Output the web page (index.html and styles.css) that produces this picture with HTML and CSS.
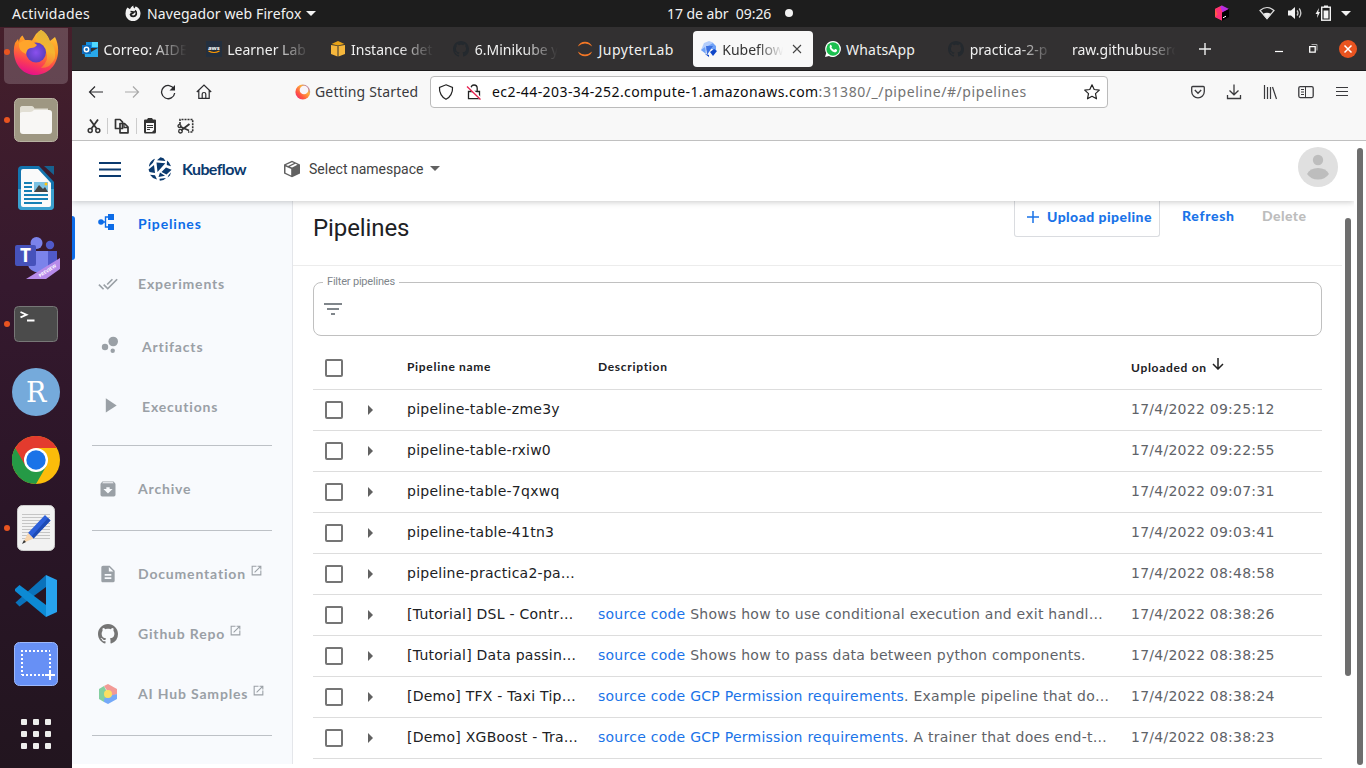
FILE: index.html
```html
<!DOCTYPE html>
<html lang="es">
<head>
<meta charset="utf-8">
<title>Kubeflow Central Dashboard</title>
<link rel="stylesheet" href="styles.css">
</head>
<body>
<svg class="defs" width="0" height="0">
  <symbol id="octo" viewBox="0 0 16 16"><path d="M8 0C3.58 0 0 3.58 0 8c0 3.54 2.29 6.53 5.47 7.59.4.07.55-.17.55-.38 0-.19-.01-.82-.01-1.49-2.01.37-2.53-.49-2.69-.94-.09-.23-.48-.94-.82-1.13-.28-.15-.68-.52-.01-.53.63-.01 1.08.58 1.23.82.72 1.21 1.87.87 2.33.66.07-.52.28-.87.51-1.07-1.78-.2-3.64-.89-3.64-3.95 0-.87.31-1.59.82-2.15-.08-.2-.36-1.02.08-2.12 0 0 .67-.21 2.2.82.64-.18 1.32-.27 2-.27s1.36.09 2 .27c1.53-1.04 2.2-.82 2.2-.82.44 1.1.16 1.92.08 2.12.51.56.82 1.27.82 2.15 0 3.07-1.87 3.75-3.65 3.95.29.25.54.73.54 1.48 0 1.07-.01 1.93-.01 2.2 0 .21.15.46.55.38A8.01 8.01 0 0 0 16 8c0-4.42-3.58-8-8-8z"/></symbol>
  <symbol id="ext" viewBox="0 0 24 24"><path d="M19 19H5V5h7V3H3v18h18v-9h-2v7zM14 3v2h3.600l-9.800 9.800 1.400 1.400L19 6.400V10h2V3h-7z"/></symbol>
  <symbol id="kf" viewBox="0 0 24 24"><path d="M9 3.200 12.500.3 15.500 1.200 17.500 4zM7 1.800 4.800 6 1 9.700C1 6.500 3.500 3 7 1.800zM19 3.500 21 5.500 23 9.200 18.800 8zM8.500 5.500 17.300 6.200 9.500 15zM6 8 7 16 1.500 15 .5 12.500zM18 10.500 23.600 12.800 18.500 17.500 13.500 15zM2 17.800 7 18.300 9 22.500 5 21zM12 15.500 17 18.800 10.500 20zM11.500 21.800 18 21 15.500 23 11.800 23.700zM20.500 18.300 23 15.300 22 18.500 19.500 20.500z"/></symbol>
</svg>
<div class="desktop">
  <header class="topbar">
    <span class="act">Actividades</span>
    <svg class="flame" width="16" height="16" viewBox="0 0 16 16"><path fill="#f2f2f2" d="M2.500 2.500 5 4.200C5.500 3 6.500 1.500 8.500.6 8 2 8.500 2.500 9.500 3.500l1-2C13 2 15.500 5 15.500 8.300A7.500 7.500 0 1 1 .7 7C.7 5.200 1.500 3.800 2.500 2.500z"/><path fill="none" stroke="#1d1d1d" stroke-width="1.700" d="M5.500 6.500 9 7.200C8 9 6 8.200 5.500 9.500 6 12 10.500 12 11.300 9c.2-1.500-.3-2.800-1.300-3.500"/></svg>
    <span class="appname">Navegador web Firefox</span>
    <i class="caret"></i>
    <span class="clock">17 de abr&nbsp; 09:26</span>
    <i class="dot"></i>
    <div class="tray">
      <svg width="16" height="16" viewBox="0 0 16 16"><path fill="#ff5a46" d="M1 4 8 .5V15.500L1 12z"/><path fill="#fc2d78" d="M4 9 8 7v8.500L1 12z"/><path fill="#b72ce0" d="M6 1.500 8 .5 15 4 8 8z"/><path fill="#ff3172" d="M1 4 6 1.500 9 8 4 10z"/><path fill="#000" d="M8 7.500 15 4v8l-7 3.700z"/><path stroke="#fff" d="M9 12.800 12 11.200"/></svg>
      <svg class="t-wifi" width="16" height="14" viewBox="0 0 16 14"><path fill="#eee" d="M8 13.500 3.800 8.200Q8 5.500 12.200 8.200z"/><path fill="none" stroke="#ddd" stroke-width="1.200" d="M8 12.500 1 4.500Q8-1.500 15 4.500z"/></svg>
      <svg class="t-vol" width="16" height="14" viewBox="0 0 16 14"><path fill="#f2f2f2" d="M1 4.500h3L8 1v12L4 9.500H1z"/><path fill="none" stroke="#ccc" stroke-width="1.300" d="M10 4.500Q12 7 10 9.500M12.200 2.500Q15.500 7 12.200 11.500"/></svg>
      <svg class="t-bat" width="16" height="16" viewBox="0 0 16 16"><path fill="#f2f2f2" d="M4 3 .5 9h2L2 13 5 7H3.300zM9 .5h4V2H9z"/><rect x="6.700" y="2.200" width="8.600" height="13" fill="none" stroke="#f2f2f2" stroke-width="1.400"/><path fill="#f2f2f2" d="M8.600 5.500h4.800v8H8.600z"/></svg>
      <i class="caret"></i>
    </div>
  </header>

  <div class="workspace">
    <nav class="dock">
      <div class="app first run">
        <svg width="46" height="46" viewBox="0 0 46 46"><defs><linearGradient id="f1" x1=".7" y1="0" x2=".4" y2="1"><stop offset="0" stop-color="#ffce38"/><stop offset=".45" stop-color="#ff8a22"/><stop offset=".75" stop-color="#fb3d55"/><stop offset="1" stop-color="#e5108a"/></linearGradient><linearGradient id="f3" x1=".5" y1="0" x2=".3" y2="1"><stop offset="0" stop-color="#e0b43c"/><stop offset=".5" stop-color="#f6b52f"/><stop offset="1" stop-color="#fb6a3c"/></linearGradient><radialGradient id="f2"><stop offset="0" stop-color="#8a50ee"/><stop offset="1" stop-color="#5b3fbf"/></radialGradient></defs><path fill="url(#f1)" d="M6 13Q6 9 9.500 6.500L12 11 19 11.500 23 5Q26 2 28 1 34 4 37 12L42 8C49 21 45 44 23 46 4 46-2 26 2 14L5 10z"/><path fill="url(#f3)" d="M23 12Q23 3 28 1 34 4 37 13 43 17 42 29 38 39 28 39 37 31 33 22 30 14 23 12z"/><circle cx="23" cy="23.500" r="10" fill="url(#f2)"/><path fill="#ffa52b" d="M6 14Q13 9 19 12L24 16Q22 19 18 19 14 19 13 25 5 22 6 14z"/></svg>
      </div>
      <div class="app run"><svg width="44" height="44" viewBox="0 0 44 44"><rect x=".5" y=".5" width="43" height="43" rx="5" fill="#9e9782" stroke="#b8b2a2"/><path fill="#e2dfd4" d="M6 13V11q0-3 3-3h8q2 0 3 2.500h14v6H6z"/><rect x="6" y="12" width="32" height="24" rx="3" fill="#f8f7f5"/><path fill="#e2dfd4" d="M6 15V11q0-3 3-3h8q3 0 3.500 3Q19 14 16 14H9q-2 0-3 1z"/></svg></div>
      <div class="app"><svg width="38" height="46" viewBox="0 0 38 46"><path fill="#1374ae" d="M5 1h17L37 17v24q0 4-4 4H5q-4 0-4-4V5q0-4 4-4z"/><path fill="#3aa0cf" d="M1 24h36v17q0 4-4 4H5q-4 0-4-4z"/><path fill="#fafafa" d="M6 4h15L34 18v22q0 2-2 2H6q-2 0-2-2V6q0-2 2-2z"/><path fill="#17618f" d="M27 1h10v9z"/><path stroke="#1680b5" stroke-width="2" d="M7 18h8M7 22h8M7 26h8M7 30h24M7 34h24M7 38h18"/><path fill="#7cc2e3" d="M17 17h14v10H17z"/><path fill="#444" d="m17 27 5-7 4 4 2-2 3 5z"/><circle cx="29" cy="19" r="1.500" fill="#ffc20e"/></svg></div>
      <div class="app"><svg width="48" height="48" viewBox="0 0 48 48"><circle cx="24.500" cy="11" r="6" fill="#7b83eb"/><circle cx="38" cy="13" r="4.200" fill="#5059c9"/><path fill="#5059c9" d="M32 19h13v18H32z"/><path fill="#7b83eb" d="M16 19h20v16q-2 6-9 6-10-2-11-8z"/><rect x="3" y="13" width="21" height="21" rx="2" fill="#4652bb"/><path fill="#b78bea" d="M48 26v11L34 47H14z"/><text class="tm" x="8" y="30">T</text><text class="pv" transform="translate(28 45.500) rotate(-33)">PREVIEW</text></svg></div>
      <div class="app run"><svg width="44" height="36" viewBox="0 0 44 36"><rect x=".5" y=".5" width="43" height="35" rx="4" fill="#4b4b4b" stroke="#777"/><path fill="none" stroke="#fff" stroke-width="1.800" d="m6.500 6 6 2.700-6 2.700M13 14.500h7.500"/></svg></div>
      <div class="app"><svg width="48" height="48" viewBox="0 0 48 48"><circle cx="24" cy="24" r="24" fill="#75aadb"/><text class="rr" x="14" y="33.500">R</text></svg></div>
      <div class="app"><svg width="48" height="48" viewBox="0 0 48 48"><circle cx="24" cy="24" r="24" fill="#fbbc0a"/><path fill="#e33b2e" d="M3.200 12A24 24 0 0 1 44.800 12H24L12 31z"/><path fill="#259a46" d="M3.200 12A24 24 0 0 0 24 48L34.400 30 24 36 13.600 30z"/><circle cx="24" cy="24" r="12" fill="#fff"/><circle cx="24" cy="24" r="9.700" fill="#1a73e8"/></svg></div>
      <div class="app run"><svg width="38" height="46" viewBox="0 0 38 46"><rect x=".5" y=".5" width="37" height="45" rx="5" fill="#f2f2f2" stroke="#ccc"/><path stroke="#c5c5c5" d="M5 9.500h28M5 12.500h28M5 15.500h28M5 18.500h28M5 21.500h28M5 24.500h28M5 27.500h28M5 30.500h28M5 33.500h28"/><path fill="#2d60da" d="m28 10 5.500 5.500-17 18-5.500-5.500z"/><path fill="#1e4bb5" d="m31 13 2.500 2.500-17 18-2-2z"/><path fill="#f7d5ac" d="m11 28 5.500 5.500L6 38z"/><path fill="#333" d="m7 35 2 2-4 2z"/></svg></div>
      <div class="app"><svg width="44" height="44" viewBox="0 0 44 44"><path fill="#0a72bb" d="M1.500 28.500 5.500 32.500 32 13V1z"/><path fill="#0d8ad4" d="M1 15 5.500 11 32 31V43L1 17z"/><path fill="#27a3ef" d="m32 1 11 5v32l-11 5z"/></svg></div>
      <div class="app"><svg width="44" height="44" viewBox="0 0 44 44"><rect x=".5" y=".5" width="43" height="43" rx="5" fill="#6790f5" stroke="#9db8fb"/><path fill="none" stroke="#fff" stroke-width="2" stroke-dasharray="2 2" d="M7 9h29M8 12v21M8 33h22M36 12v17"/><path stroke="#fff" stroke-width="2" d="M31 33h10M36 28v10"/></svg></div>
      <div class="app last"><div class="grid9"><i></i><i></i><i></i><i></i><i></i><i></i><i></i><i></i><i></i></div></div>
    </nav>

    <div class="browser">
      <div class="tabs">
        <div class="tab"><svg width="16" height="16" viewBox="0 0 16 16"><path fill="#1490df" d="M4 1h12v6H4z"/><path fill="#50d9ff" d="M10 1h6v5h-6z"/><path fill="#28a8ea" d="m2 8 7 3 7-4v9H3z"/><path fill="#0f6cbd" d="M0 4h9v9H0z"/><circle cx="4.500" cy="8.500" r="2.200" fill="none" stroke="#fff" stroke-width="1.500"/></svg><span class="fade">Correo: AIDE</span></div>
        <div class="tab"><svg width="16" height="16" viewBox="0 0 16 16"><path fill="#232f3e" d="M0 0h16v16H0z"/><text class="aws" x="2" y="8.500">aws</text><path fill="none" stroke="#f90" stroke-width="1.200" d="M2.500 10q5.500 3 11 0"/></svg><span class="fade">Learner Lab</span></div>
        <div class="tab"><svg width="16" height="16" viewBox="0 0 16 16"><path fill="#f6b73c" d="M1 4v9l6.500 2.500V5zM8.500 5v10.500L15 13V4z"/><path fill="#e8a317" d="m1.500 3 6.500-3 6.500 3L8 4.500z"/></svg><span class="fade">Instance det</span></div>
        <div class="tab"><svg class="gh" width="16" height="16"><use href="#octo"/></svg><span class="fade">6.Minikube y</span></div>
        <div class="tab"><svg width="16" height="16" viewBox="0 0 16 16"><path fill="#f37726" d="M.8 5.500a7.800 7.800 0 0 1 14.400 0Q8-.5.800 5.500zM.8 10.500a7.800 7.800 0 0 0 14.400 0Q8 16.500.8 10.500z"/></svg><span class="jl">JupyterLab</span></div>
        <div class="tab active"><svg width="16" height="16" viewBox="0 0 16 16"><path fill="#b3cdfb" d="M3 2 8 0l4 1.500V4L3 11 0 9z"/><path fill="#6ea1f7" d="m12 2 3 3v5L6 5.500zM0 9l4-3 1 7z"/><path fill="#3b6fe0" d="m5 5 7 0-6 9z"/><path fill="#0f46c8" d="m9 11 4-3 3 2-4 5zM4 13l4 1v2z"/></svg><span class="fade">Kubeflow</span><svg class="x" width="10" height="10" viewBox="0 0 10 10"><path stroke="#444" stroke-width="1.100" d="m1 1 8 8M9 1 1 9"/></svg></div>
        <div class="tab"><svg width="16" height="16" viewBox="0 0 16 16"><path fill="#fff" d="M8 0a8 8 0 1 1-4 15L0 16l1.200-4A8 8 0 0 1 8 0z"/><circle cx="8" cy="8" r="6.700" fill="#1bbf4f"/><path fill="#fff" d="M5.300 3.800c1-.4 1.100.5 1.700 1.800-.7 1.200-.7 1 .2 2 1 1 2 1.500 2.300 1.100.8-1.200 1-.7 2.600.2 0 2-1.400 2.500-2.800 2.300C6.500 10.500 3.200 7 5.300 3.800z"/></svg><span class="wa">WhatsApp</span></div>
        <div class="tab"><svg class="gh" width="16" height="16"><use href="#octo"/></svg><span class="fade">practica-2-p</span></div>
        <div class="tab"><span class="fade wide">raw.githubuserc</span></div>
        <svg class="plus" width="12" height="12" viewBox="0 0 12 12"><path stroke="#eee" stroke-width="1.400" d="M0 6h12M6 0v12"/></svg>
        <div class="winctl">
          <svg width="9" height="10" viewBox="0 0 9 10"><path stroke="#fff" stroke-width="1.200" d="M0 7.500h8"/></svg>
          <svg width="9" height="9" viewBox="0 0 9 9"><path fill="none" stroke="#fff" stroke-width="1.300" d="M.7 2.700h5.500v5.500H.7z"/><path fill="none" stroke="#aaa" d="M2.500.5H8v6"/></svg>
          <svg width="18" height="18" viewBox="0 0 18 18"><circle cx="9" cy="9" r="9" fill="#e95420"/><path stroke="#fff" stroke-width="1.500" d="m5.500 5.500 7 7m0-7-7 7"/></svg>
        </div>
      </div>

      <div class="toolbar">
        <div class="nav">
          <svg width="16" height="16" viewBox="0 0 16 16"><path fill="none" stroke="#2b2b2e" stroke-width="1.200" d="M15 8H1.500M7 2.500 1.500 8 7 13.500"/></svg>
          <svg width="16" height="16" viewBox="0 0 16 16"><path fill="none" stroke="#a9a9a9" stroke-width="1.200" d="M1 8h13.500M9 2.500 14.500 8 9 13.500"/></svg>
          <svg width="16" height="16" viewBox="0 0 16 16"><path fill="none" stroke="#2b2b2e" stroke-width="1.300" d="M14 5A6.600 6.600 0 1 0 14.700 9"/><path fill="#2b2b2e" d="M15 1v5.500H9.500z"/></svg>
          <svg width="16" height="16" viewBox="0 0 16 16"><path fill="none" stroke="#2b2b2e" stroke-width="1.200" d="M.8 8 8 1l7.200 7M2.800 6.500V14.400h10.400V6.500M6.200 14.400V10q0-1.500 1.800-1.500T9.800 10v4.400"/></svg>
          <div class="started"><svg width="16" height="16" viewBox="0 0 16 16"><defs><linearGradient id="g1" x1="1" y1="0" x2="0" y2="1"><stop offset="0" stop-color="#8157f5"/><stop offset=".35" stop-color="#ffb13d"/><stop offset=".7" stop-color="#ff5541"/><stop offset="1" stop-color="#e91e8c"/></linearGradient></defs><circle cx="7.800" cy="8" r="7.400" fill="url(#g1)"/><circle cx="9" cy="6" r="4.300" fill="#f8f4fa"/></svg><span>Getting Started</span></div>
          <div class="urlbar">
            <svg width="16" height="16" viewBox="0 0 16 16"><path fill="none" stroke="#222" stroke-width="1.200" d="M8 .8 14.500 3.500C15 8.500 12 13.500 8 15.300 4 13.500 1 8.500 1.500 3.500z"/></svg>
            <svg width="16" height="16" viewBox="0 0 16 16"><path fill="none" stroke="#222" stroke-width="1.300" d="M2.500 7.500h11v7.200h-11zM4.800 7.500V4.200a3.200 3.200 0 0 1 6.400 0v3.300"/><path stroke="#fff" stroke-width="2.500" d="M2 2 15 15"/><path stroke="#e8204f" stroke-width="1.300" d="m1 2.500 13.500 13"/></svg>
            <span class="url">ec2-44-203-34-252.compute-1.amazonaws.com<em>:31380/_/pipeline/#/pipelines</em></span>
            <svg width="16" height="16" viewBox="0 0 16 16"><path fill="none" stroke="#222" stroke-width="1.200" stroke-linejoin="round" d="m8 .8 2.200 4.700 5.100.6-3.800 3.500 1 5.200L8 12.300l-4.500 2.500 1-5.200L.7 6.100l5.100-.6z"/></svg>
          </div>
          <div class="right">
            <svg width="16" height="16" viewBox="0 0 16 16"><path fill="none" stroke="#3a3a3d" stroke-width="1.300" d="M1.700 3.500q0-1 1-1h10.600q1 0 1 1v4A6.300 6.300 0 0 1 1.700 7.500zM4.800 6 8 9.300 11.200 6"/></svg>
            <svg width="16" height="16" viewBox="0 0 16 16"><path fill="none" stroke="#3a3a3d" stroke-width="1.300" d="M8 .5v10M3.500 6.500 8 10.800l4.500-4.300M1.500 11v3.500h13V11"/></svg>
            <svg width="16" height="16" viewBox="0 0 16 16"><path fill="none" stroke="#3a3a3d" stroke-width="1.200" d="M2.500 1v14M5.500 3v12M8.500 3v12M10.500 3l4 12"/></svg>
            <svg width="16" height="16" viewBox="0 0 16 16"><rect x=".8" y="2.600" width="14.400" height="11" rx="1.500" fill="none" stroke="#3a3a3d" stroke-width="1.300"/><path stroke="#3a3a3d" d="M7.500 3v10.500M3 5.500h3M3 8h3M3 10.500h3"/></svg>
            <svg width="16" height="16" viewBox="0 0 16 16"><path stroke="#3a3a3d" stroke-width="1.200" d="M2 3.500h12M2 7.500h12M2 11.500h12"/></svg>
          </div>
        </div>
        <div class="edit">
          <svg width="14" height="16" viewBox="0 0 14 16"><path fill="none" stroke="#333" stroke-width="1.800" d="M3 1.500 9.500 10.500M11 1.500 4.500 10.500"/><circle cx="3.200" cy="12.500" r="2" fill="none" stroke="#333" stroke-width="1.500"/><circle cx="10.800" cy="12.500" r="2" fill="none" stroke="#333" stroke-width="1.500"/></svg>
          <i></i>
          <svg width="16" height="16" viewBox="0 0 16 16"><path fill="#f8f8f8" stroke="#333" stroke-width="1.700" stroke-linejoin="round" d="M1.500 1.500h4.500l2.500 2.500v6.500h-7zM6 5.500h4.500l3.500 3.500v5.800H6z"/><path fill="none" stroke="#333" stroke-width="1.300" d="M10 6v3.500H14"/></svg>
          <i></i>
          <svg width="14" height="16" viewBox="0 0 14 16"><path fill="#333" d="M1 2.500q0-1 1-1h2L5 0h4l1 1.500h2q1 0 1 1V14q0 1.500-1.500 1.500h-9Q1 15.500 1 14z"/><path fill="#f8f8f8" d="M3 5h8v7l-2 2H3z"/><path stroke="#333" d="M4 7.500h6M4 9.500h6M4 11.500h3"/></svg>
          <svg class="snip" width="17" height="16" viewBox="0 0 17 16"><path fill="none" stroke="#333" stroke-width="1.600" stroke-dasharray="2 1" d="M3 6V1.500h12.700V14H11"/><path stroke="#333" stroke-width="1.800" d="M3 8.500 12 12.500M4 12.500l8.500-6.500"/><circle cx="2.500" cy="8" r="1.500" fill="none" stroke="#333" stroke-width="1.300"/><circle cx="3.500" cy="13.200" r="1.800" fill="none" stroke="#333" stroke-width="1.300"/></svg>
        </div>
      </div>

      <div class="page">
        <div class="frame">
          <header class="kfbar">
            <svg width="22" height="16" viewBox="0 0 22 16"><path stroke="#0b3a6e" stroke-width="2.200" d="M0 2h22M0 8.500h22M0 15h22"/></svg>
            <svg class="kflogo" width="24" height="24"><use href="#kf"/></svg>
            <span class="brand">Kubeflow</span>
            <svg class="cube" width="18" height="18" viewBox="0 0 18 18"><path fill="#616161" d="m9 .8 8 3.600v9L9 17.200 1 13.400v-9z"/><path fill="#fff" d="m2.500 6.500 5.700 2.600v6.300l-5.700-2.700z"/><path fill="#fff" d="m9 2.200 2 .9-6 2.800-2-1zM12.500 3.800l2 .9L9 7.400l-2.200-1z"/></svg>
            <span class="ns">Select namespace</span>
            <i class="nscaret"></i>
            <svg class="avatar" width="40" height="40" viewBox="0 0 40 40"><circle cx="20" cy="20" r="20" fill="#e0e0e0"/><circle cx="20" cy="13" r="5.200" fill="#bdbdbd"/><path fill="#bdbdbd" d="M9 27Q12 21 20 21t11 6q-4 5.500-11 5.500T9 27z"/></svg>
          </header>
          <div class="body">
            <aside class="side">
              <a class="item on"><svg class="up" width="16" height="16" viewBox="0 0 16 16"><circle cx="3" cy="8" r="2.800"/><path d="M10 0h6v6h-6zM10 10h6v6h-6z"/><path fill="none" stroke="#0d6ce8" stroke-width="1.400" d="M3 8h4.500M10 3H7.500v10H10"/></svg><span>Pipelines</span></a>
              <a class="item"><svg width="20" height="20" viewBox="0 0 24 24"><path d="m18 7-1.400-1.400-6.300 6.300 1.400 1.400zm4.200-1.400L11.700 16.200 7.500 12 6.100 13.400l5.600 5.600 12-12zM.4 13.400 6 19l1.400-1.400L1.800 12z"/></svg><span>Experiments</span></a>
              <a class="item in"><svg class="up" width="20" height="20" viewBox="0 0 20 20"><circle cx="5" cy="12" r="3.200"/><circle cx="12.700" cy="15.700" r="2.200"/><circle cx="13.200" cy="6.500" r="4.800"/></svg><span>Artifacts</span></a>
              <a class="item"><svg class="play" width="20" height="20" viewBox="0 0 24 24"><path d="M7 4v17l13-8.500z"/></svg><span>Executions</span></a>
              <hr>
              <a class="item"><svg width="20" height="20" viewBox="0 0 24 24"><path d="m20.500 5.200-1.300-1.700C18.900 3.200 18.500 3 18 3H6c-.5 0-.9.200-1.200.5L3.500 5.200C3.200 5.600 3 6 3 6.500V19a2 2 0 0 0 2 2h14a2 2 0 0 0 2-2V6.500c0-.5-.2-.9-.5-1.300zM12 17.500 6.500 12H10v-2h4v2h3.500zM5.100 5l.8-1h12l.9 1z"/></svg><span>Archive</span></a>
              <hr class="h2">
              <a class="item"><svg width="20" height="20" viewBox="0 0 24 24"><path d="M14 2H6a2 2 0 0 0-2 2v16c0 1.100.9 2 2 2h12a2 2 0 0 0 2-2V8zm2 16H8v-2h8zm0-4H8v-2h8zm-3-5V3.500L18.500 9z"/></svg><span>Documentation</span><svg class="ext" width="13" height="13"><use href="#ext"/></svg></a>
              <a class="item"><svg class="ghd" width="20" height="20"><use href="#octo"/></svg><span>Github Repo</span><svg class="ext" width="13" height="13"><use href="#ext"/></svg></a>
              <a class="item"><svg width="20" height="20" viewBox="0 0 20 20"><path fill="#84cfa0" d="m1 5 5-3 4 8-4 8-5-3z"/><path fill="#f29a96" d="m6 2 4-2 9 5v5l-4 2-5-4z"/><path fill="#74a9f8" d="m6 15 4-3 5-1 4-1v5l-9 5-4-2z"/><circle cx="10" cy="10" r="4" fill="#fbdf62"/></svg><span>AI Hub Samples</span><svg class="ext" width="13" height="13"><use href="#ext"/></svg></a>
              <hr class="h2">
            </aside>
            <main class="main">
              <div class="head">
                <h1>Pipelines</h1>
                <div class="btns">
                  <span class="upload"><svg width="12" height="12" viewBox="0 0 12 12"><path stroke="#1a73e8" stroke-width="1.500" d="M0 6h12M6 0v12"/></svg><b>Upload pipeline</b></span>
                  <b class="refresh">Refresh</b>
                  <b class="del">Delete</b>
                </div>
              </div>
              <div class="filter"><label>Filter pipelines</label><svg width="18" height="12" viewBox="0 0 18 12"><path stroke="#80868b" stroke-width="2" d="M0 1h18M3 6h12M7 11h4"/></svg></div>
              <div class="row th"><span class="cb"><i></i></span><span>Pipeline name</span><span>Description</span><span>Uploaded on<svg width="12" height="12" viewBox="0 0 12 12"><path fill="none" stroke="#222" stroke-width="1.500" d="M6 0v10.500M1 6l5 5 5-5"/></svg></span></div>
              <div class="row"><span class="cb"><i></i><u></u></span><span>pipeline-table-zme3y</span><span></span><span>17/4/2022 09:25:12</span></div>
              <div class="row"><span class="cb"><i></i><u></u></span><span>pipeline-table-rxiw0</span><span></span><span>17/4/2022 09:22:55</span></div>
              <div class="row"><span class="cb"><i></i><u></u></span><span>pipeline-table-7qxwq</span><span></span><span>17/4/2022 09:07:31</span></div>
              <div class="row"><span class="cb"><i></i><u></u></span><span>pipeline-table-41tn3</span><span></span><span>17/4/2022 09:03:41</span></div>
              <div class="row"><span class="cb"><i></i><u></u></span><span>pipeline-practica2-pa…</span><span></span><span>17/4/2022 08:48:58</span></div>
              <div class="row"><span class="cb"><i></i><u></u></span><span>[Tutorial] DSL - Contr…</span><span><a>source code</a> Shows how to use conditional execution and exit handl…</span><span>17/4/2022 08:38:26</span></div>
              <div class="row"><span class="cb"><i></i><u></u></span><span>[Tutorial] Data passin…</span><span><a>source code</a> Shows how to pass data between python components.</span><span>17/4/2022 08:38:25</span></div>
              <div class="row"><span class="cb"><i></i><u></u></span><span>[Demo] TFX - Taxi Tip…</span><span><a>source code</a> <a>GCP Permission requirements</a>. Example pipeline that do…</span><span>17/4/2022 08:38:24</span></div>
              <div class="row"><span class="cb"><i></i><u></u></span><span>[Demo] XGBoost - Tra…</span><span><a>source code</a> <a>GCP Permission requirements</a>. A trainer that does end-t…</span><span>17/4/2022 08:38:23</span></div>
            </main>
            <div class="scroll inner"><i></i></div>
          </div>
        </div>
        <div class="scroll outer"><i></i></div>
      </div>
    </div>
  </div>
</div>
</body>
</html>
```

FILE: styles.css
```css
* { box-sizing: border-box; }
body { margin: 0; font-family: "Noto Sans", sans-serif; }
svg { display: block; flex: none; }
.defs { position: absolute; }
.desktop { width: 1366px; height: 768px; overflow: hidden; display: flex; flex-direction: column; background: #fff; }

.topbar { height: 27px; flex: none; background: #1d1d1d; color: #f2f2f2; display: flex; align-items: center; font-size: 14px; padding: 0 0 1px 12px; white-space: nowrap; }
.act { width: 113px; letter-spacing: .3px; }
.appname { width: 156px; margin-left: 6px; letter-spacing: .1px; }
.caret { border: 5px solid transparent; border-top-color: #f2f2f2; border-bottom: 0; margin-left: 3px; }
.clock { margin-left: 351px; width: 107px; letter-spacing: -.05px; }
.dot { width: 8px; height: 8px; border-radius: 50%; background: #f2f2f2; margin-left: 11px; }
.tray { margin-left: auto; display: flex; align-items: center; padding-right: 15px; }
.t-wifi { margin-left: 29px; }
.t-vol { margin-left: 12px; }
.t-bat { margin-left: 12px; }
.tray .caret { margin-left: 10px; }

.workspace { flex: 1; display: flex; min-height: 0; }
.dock { width: 72px; flex: none; background: linear-gradient(#451f2b, #35192e 35%, #2a1527 65%, #22151f); display: flex; flex-direction: column; }
.app { height: 68px; flex: none; display: flex; align-items: center; justify-content: center; position: relative; }
.app.first { height: 59px; padding-bottom: 9px; }
.app.first::after { content: ""; position: absolute; left: 4px; top: 1px; width: 64px; height: 56px; border-radius: 0 0 5px 5px; background: rgba(255,255,255,.18); }
.app.first svg { position: relative; z-index: 1; }
.app.run::before { content: ""; position: absolute; left: 4px; top: 31px; width: 6px; height: 6px; border-radius: 50%; background: #e95420; z-index: 1; }
.app.first.run::before { top: 22px; }
.app.last { height: 70px; padding-top: 2px; }
.grid9 { display: grid; grid-template-columns: repeat(3, 6px); gap: 6px; }
.grid9 i { width: 6px; height: 6px; border-radius: 1px; background: #eeeeec; }
.tm { font: 700 19px "Noto Sans", sans-serif; fill: #fff; }
.pv { font: 700 4.500px "Noto Sans", sans-serif; fill: #fff; }
.rr { font: 30px "DejaVu Serif", serif; font-size: 27px; fill: #fff; }
.aws { font: 700 6px "Noto Sans", sans-serif; fill: #fff; }

.browser { flex: 1; min-width: 0; display: flex; flex-direction: column; }
.tabs { height: 44px; flex: none; background: #323031; border-bottom: 1px solid #1c1b1c; display: flex; align-items: center; padding-left: 2px; color: #f0f0f0; font-size: 14px; }
.tab { width: 123.750px; height: 36px; flex: none; display: flex; align-items: center; gap: 5px; padding: 1px 0 0 8px; white-space: nowrap; }
.tab svg { margin-top: -1px; }
.tab span { width: 88px; margin-left: .5px; }
.tab .fade { -webkit-mask-image: linear-gradient(90deg, #000 55%, transparent 94%); mask-image: linear-gradient(90deg, #000 55%, transparent 94%); }
.tab .wide { width: 110px; margin-left: 0; -webkit-mask-image: linear-gradient(90deg, #000 65%, transparent 94%); mask-image: linear-gradient(90deg, #000 65%, transparent 94%); }
.tab .jl { letter-spacing: .5px; }
.tab .wa { letter-spacing: .2px; }
.tab .gh { fill: #24292e; }
.tab.active { width: 120px; margin-right: 3.750px; background: #f8f8f8; color: #333; border-radius: 4px; }
.tab.active .fade { width: 65px; }
.plus { margin-left: 11px; }
.winctl { margin-left: auto; display: flex; align-items: center; padding-right: 9px; }
.winctl svg { margin-left: 25px; }
.winctl svg:last-child { margin-left: 21px; }

.toolbar { height: 70px; flex: none; background: #f8f8f8; border-bottom: 1px solid #c0c0c0; }
.nav { height: 41px; display: flex; align-items: center; padding-left: 16px; gap: 20px; }
.started { display: flex; align-items: center; gap: 4px; margin-left: 63px; width: 115px; font-size: 14px; letter-spacing: .18px; color: #3a3a3d; white-space: nowrap; }
.urlbar { width: 678px; height: 32px; background: #fff; border: 1px solid #bbb; border-radius: 4px; display: flex; align-items: center; padding: 0 7px; gap: 12px; }
.url { flex: 1; margin-left: -2px; font-size: 14px; letter-spacing: .42px; color: #0c0c0d; white-space: nowrap; }
.url em { font-style: normal; letter-spacing: .57px; color: #737373; }
.right { margin-left: 62px; display: flex; gap: 20px; }
.edit { display: flex; align-items: center; padding: 6px 0 0 15px; gap: 6px; }
.edit i { width: 1px; height: 16px; background: #ccc; }
.edit .snip { margin-left: 14px; }

.page { flex: 1; min-height: 0; display: flex; background: #fff; }
.frame { width: 1282px; display: flex; flex-direction: column; height: 623px; overflow: hidden; }
.kfbar { height: 60px; flex: none; display: flex; align-items: center; padding: 0 16px 5px 27px; background: #fff; box-shadow: 0 1px 6px rgba(0,0,0,.22); position: relative; z-index: 2; }
.kflogo { fill: #0b3a6e; margin-left: 27px; }
.brand { font: 700 16px Lato, sans-serif; letter-spacing: -.6px; color: #0b3a6e; margin-left: 10px; width: 101px; }
.ns { font: 14px Roboto, sans-serif; color: #424242; margin-left: 8px; width: 115px; white-space: nowrap; }
.nscaret { border: 5px solid transparent; border-top-color: #616161; border-bottom: 0; margin-left: 6px; }
.avatar { margin: -4px 0 0 auto; }
.body { flex: 1; min-height: 0; display: flex; }

.side { width: 221px; flex: none; background: #f8fafd; border-right: 1px solid #e4e6ea; }
.item { height: 60px; display: flex; align-items: center; padding-left: 26px; font: 700 14px Lato, sans-serif; letter-spacing: .83px; color: #9aa0a6; fill: #9aa0a6; position: relative; }
.item > span { margin: -2px 0 0 20px; }
.item.on { height: 53px; padding-bottom: 7px; color: #0d6ce8; fill: #0d6ce8; }
.item.on::before { content: ""; position: absolute; left: 0; top: 15px; width: 3px; height: 44px; background: #0d6ce8; border-radius: 0 4px 4px 0; }
.item.on span { margin-left: 24px; }
.up { margin-bottom: 4px; }
.item.in { margin-top: 3px; padding-left: 28px; }
.item.in span, .item .play + span { margin-left: 22px; }
.play { margin: 0 0 4px 2px; }
.ext { margin: 0 0 8px 4px; }
.ghd { fill: #757575; }
.side hr { border: 0; height: 1px; background: #bdc1c6; margin: 8px 20px 13px; }
.side .h2 { margin-top: 11px; }

.main { width: 1049px; flex: none; }
.head { height: 65px; border-bottom: 1px solid #ececec; display: flex; padding-left: 20px; }
h1 { margin: 9px 0 0; font: 400 24px/36px Roboto, sans-serif; letter-spacing: -.1px; color: #202124; }
.btns { margin-left: auto; display: flex; font: 700 14px Lato, sans-serif; color: #1a73e8; letter-spacing: .45px; padding-right: 36px; white-space: nowrap; }
.upload { width: 146px; height: 36px; border: 1px solid #dadce0; border-top: 0; border-radius: 0 0 3px 3px; display: flex; align-items: center; gap: 8px; padding: 0 0 4px 12px; }
.btns > b { line-height: 30px; }
.refresh { width: 80px; margin-left: 22px; letter-spacing: .7px; }
.del { color: #bdbdbd; width: 44px; }
.filter { margin: 16px 20px 0; height: 54px; border: 1px solid #c0c0c0; border-radius: 8px; position: relative; padding: 20px 0 0 10px; }
.filter label { position: absolute; left: 9px; top: -8px; background: #fff; padding: 0 4px; font: 11px/14px Roboto, sans-serif; letter-spacing: -.2px; color: #80868b; }
.row { margin: 0 20px; height: 41px; border-bottom: 1px solid #ddd; display: grid; grid-template-columns: 94px 191px 533px 191px; align-items: center; font: 14px/16px "DejaVu Sans", sans-serif; letter-spacing: .25px; color: #5f6368; white-space: nowrap; padding-bottom: 2px; }
.row > span:nth-child(2) { color: #202124; }
.row a { color: #1a73e8; }
.cb { display: flex; align-items: center; padding: 2px 0 0 12px; }
.cb i { width: 18px; height: 18px; border: 2px solid #757575; border-radius: 2px; }
.cb u { border: 5px solid transparent; border-left-color: #616161; border-right: 0; margin-left: 25px; }
.row.th { height: 54px; padding-top: 10px; font: 700 12px Lato, sans-serif; letter-spacing: .7px; color: #202124; }
.th svg { display: inline-block; margin-left: 5px; vertical-align: 2px; }
.scroll { width: 12px; flex: none; }
.scroll i { display: block; width: 6px; background: #6e6e6e; border-radius: 3px; margin-left: 3px; }
.inner { padding-top: 17px; }
.inner i { height: 458px; }
.outer { padding-top: 7px; }
.outer i { height: 617px; }
```
